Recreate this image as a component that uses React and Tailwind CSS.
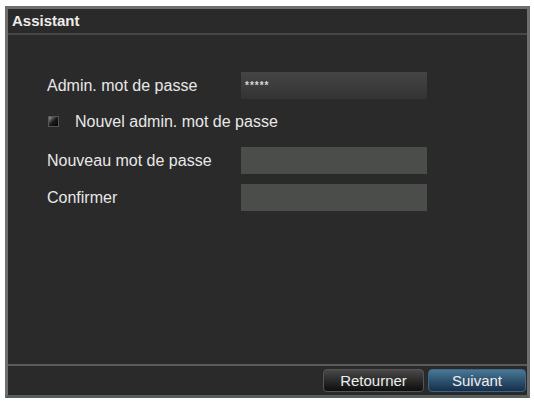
export default function App() {
    return (
        <div className="w-[534px] h-[401px] bg-white pt-[6px] pl-[5px]" style={{ fontFamily: '"Liberation Sans", Arial, sans-serif' }}>
            <div className="w-[525px] h-[392px] flex flex-col border-[3px] border-[#6e6e6e] border-b-[#56605a] bg-[#2a2a2a]">
                {/* Titre */}
                <div className="h-[26px] flex items-center px-[4px] border-b-2 border-[#474747]">
                    <span className="text-[15px] font-bold text-[#ececec]">Assistant</span>
                </div>

                {/* Formulaire */}
                <div className="flex-1 flex flex-col pl-[39px] pt-[37px] text-[16px] text-[#e8e8e8]">
                    <div className="flex items-center h-[27px]">
                        <span className="w-[194px]">Admin. mot de passe</span>
                        <div className="w-[186px] h-[27px] bg-gradient-to-b from-[#454545] to-[#333333] flex items-center px-[4px]">
                            <span className="text-[10px] font-bold text-[#d8d8d8] tracking-[1px] leading-none">*****</span>
                        </div>
                    </div>
                    <div className="flex items-center h-[27px] mt-[9px] pl-[1px]">
                        <span className="w-[11px] h-[11px] bg-gradient-to-br from-[#9a9a9a] via-[#1a1a1a] to-[#050505] border border-[#555]" />
                        <span className="ml-[16px]">Nouvel admin. mot de passe</span>
                    </div>
                    <div className="flex items-center h-[27px] mt-[12px]">
                        <span className="w-[194px]">Nouveau mot de passe</span>
                        <div className="w-[186px] h-[27px] bg-[#4b4d4b]" />
                    </div>
                    <div className="flex items-center h-[27px] mt-[10px]">
                        <span className="w-[194px]">Confirmer</span>
                        <div className="w-[186px] h-[27px] bg-[#4b4d4b]" />
                    </div>
                </div>

                {/* Boutons */}
                <div className="h-[31px] border-t-2 border-[#5a5a5a] flex items-center justify-end gap-[4px] pr-[1px]">
                    <button className="w-[101px] h-[23px] rounded-[4px] border border-[#555] bg-gradient-to-b from-[#4a4a4a] to-[#0e0e0e] text-[15px] text-[#eeeeee]">
                        Retourner
                    </button>
                    <button className="w-[98px] h-[23px] rounded-[4px] border border-[#3d6685] bg-gradient-to-b from-[#4a7898] to-[#16304a] text-[15px] text-[#eeeeee]">
                        Suivant
                    </button>
                </div>
            </div>
        </div>
    );
}
